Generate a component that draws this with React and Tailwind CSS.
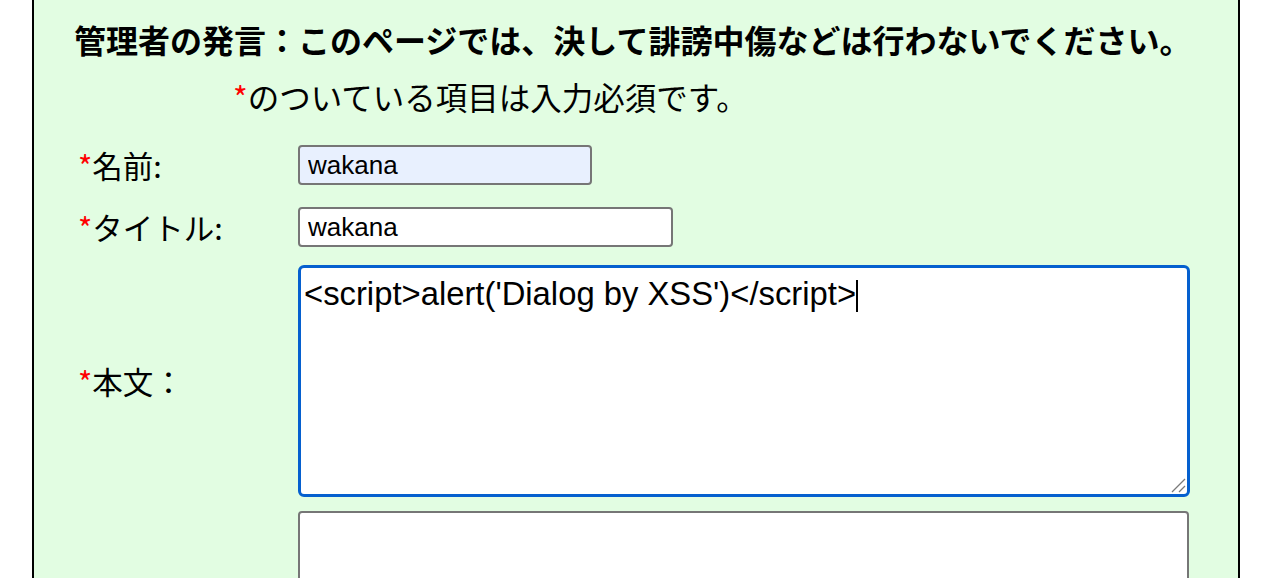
import React from 'react';

function Row({ label, className = '', children }) {
  return (
    <div className={`flex items-center ${className}`}>
      <div className="w-[220px] shrink-0 text-[30.5px] leading-[40px]">
        {label && (
          <>
            <span className="text-[#ff0000]">*</span>
            {label}
          </>
        )}
      </div>
      {children}
    </div>
  );
}

export default function App() {
  const inputClass =
    "h-[40px] rounded-[4px] border-2 border-[#767676] px-[8px] font-['Liberation_Sans',Arial,sans-serif] text-[26px] text-black outline-none";

  return (
    <div className="h-[578px] overflow-hidden bg-white">
      <div className="ml-[32px] h-full w-[1208px] border-x-2 border-black bg-[#e2fde2] font-['Noto_Sans_CJK_JP',sans-serif] text-black">
        {/* Notice from the admin */}
        <h2 className="pl-[40px] pt-[19px] text-[32px] font-bold leading-[40px]">
          管理者の発言：このページでは、決して誹謗中傷などは行わないでください。
        </h2>
        <p className="mt-[17px] pl-[199px] text-[31.5px] leading-[40px]">
          <span className="text-[#ff0000]">*</span>のついている項目は入力必須です。
        </p>

        {/* Form */}
        <div className="mt-[29px] pl-[44px]">
          <Row label="名前:">
            <input
              readOnly
              defaultValue="wakana"
              className={`${inputClass} w-[294px] bg-[#e8f0fe]`}
            />
          </Row>
          <Row label="タイトル:" className="mt-[22px]">
            <input
              readOnly
              defaultValue="wakana"
              className={`${inputClass} w-[375px] bg-white`}
            />
          </Row>
          <Row label="本文：" className="mt-[18px]">
            <div className="relative h-[232px] w-[892px] rounded-[6px] border-[3px] border-[#0560cf] bg-white pl-[3px] pt-[7px] font-['Liberation_Sans',Arial,sans-serif] text-[32.8px] leading-[37px] whitespace-pre">
              {"<script>alert('Dialog by XSS')</script>"}
              <span className="inline-block h-[32px] w-[2px] bg-black align-[-7px]" />
              <svg
                className="absolute bottom-[1px] right-[1px]"
                width="16"
                height="16"
                viewBox="0 0 16 16"
              >
                <path d="M2 15 L15 2" stroke="#7a7a7a" strokeWidth="1.2" />
                <path d="M9 15 L15 9" stroke="#7a7a7a" strokeWidth="1.2" />
              </svg>
            </div>
          </Row>
          <Row className="mt-[14px]">
            <div className="h-[120px] w-[891px] rounded-[4px] border-2 border-[#767676] bg-white" />
          </Row>
        </div>
      </div>
    </div>
  );
}
